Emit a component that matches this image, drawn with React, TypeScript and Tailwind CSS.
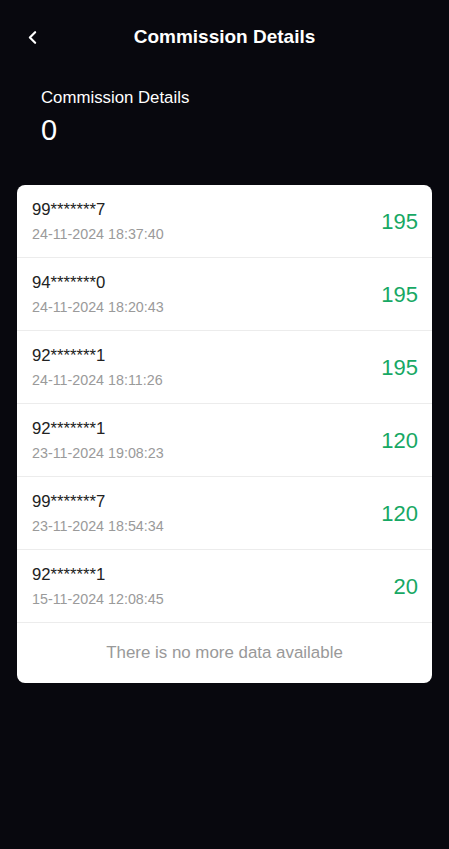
import { ChevronLeft } from 'lucide-react';

const rows = [
    { phone: '99*******7', time: '24-11-2024 18:37:40', amount: 195 },
    { phone: '94*******0', time: '24-11-2024 18:20:43', amount: 195 },
    { phone: '92*******1', time: '24-11-2024 18:11:26', amount: 195 },
    { phone: '92*******1', time: '23-11-2024 19:08:23', amount: 120 },
    { phone: '99*******7', time: '23-11-2024 18:54:34', amount: 120 },
    { phone: '92*******1', time: '15-11-2024 12:08:45', amount: 20 },
];

const App = () => {
    return (
        <div className="min-h-[849px] bg-[#08080e] font-['Liberation_Sans',Arial,sans-serif] text-white">
            <div className="relative flex h-[74px] items-center justify-center">
                <button className="absolute left-[22px] top-[27px] text-white">
                    <ChevronLeft size={21} strokeWidth={2.5} />
                </button>
                <h1 className="text-[19px] font-bold">Commission Details</h1>
            </div>

            <div className="px-[41px] pt-[14px] pb-[38px]">
                <p className="text-[16.8px] leading-[20px]">Commission Details</p>
                <p className="mt-[5px] text-[29px] leading-[34px]">0</p>
            </div>

            <div className="mx-[17px] overflow-hidden rounded-[8px] bg-white">
                {rows.map((r, i) => (
                    <div key={i} className="flex h-[73px] items-center justify-between border-b border-[#ececec] pl-[15px] pr-[14px]">
                        <div className="flex flex-col">
                            <span className="text-[16.7px] leading-[20px] text-[#222]">{r.phone}</span>
                            <span className="mt-[6px] text-[14.3px] leading-[16px] text-[#9a9a9a]">{r.time}</span>
                        </div>
                        <span className="text-[22px] text-[#17a864]">{r.amount}</span>
                    </div>
                ))}
                <div className="flex h-[60px] items-center justify-center text-[16.9px] text-[#999]">
                    There is no more data available
                </div>
            </div>
        </div>
    );
};

export default App;
